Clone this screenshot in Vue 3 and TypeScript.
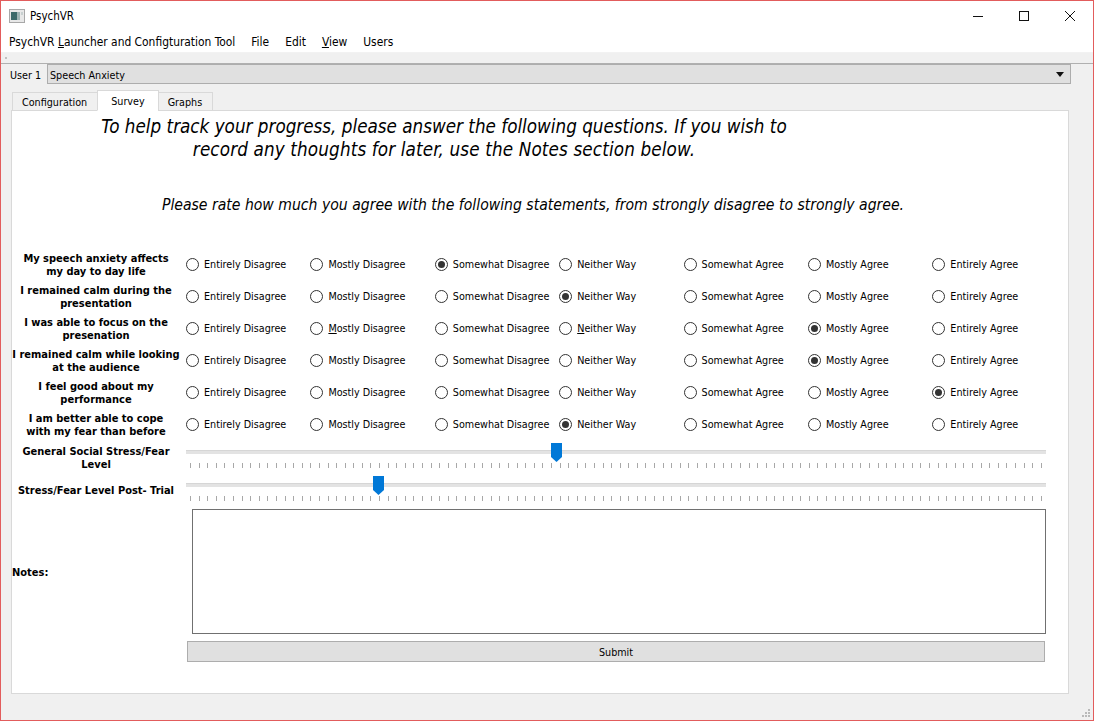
<script setup lang="ts">
const options = ['Entirely Disagree','Mostly Disagree','Somewhat Disagree','Neither Way','Somewhat Agree','Mostly Agree','Entirely Agree']
const questions = [
  { lines: ['My speech anxiety affects','my day to day life'], sel: 2, ul: [] as number[] },
  { lines: ['I remained calm during the','presentation'], sel: 3, ul: [] as number[] },
  { lines: ['I was able to focus on the','presenation'], sel: 5, ul: [1,3] },
  { lines: ['I remained calm while looking','at the audience'], sel: 5, ul: [] as number[] },
  { lines: ['I feel good about my','performance'], sel: 6, ul: [] as number[] },
  { lines: ['I am better able to cope','with my fear than before'], sel: 3, ul: [] as number[] },
]
const ticks = Array.from({ length: 100 })
</script>

<template>
  <div class="win">
    <header class="titlebar">
      <svg class="appicon" width="16" height="14" viewBox="0 0 16 14">
        <rect x="0.5" y="0.5" width="15" height="13" fill="#e8e8e8" stroke="#a8a8a8"/>
        <rect x="2" y="3" width="6" height="8" fill="#3c6a6a"/>
        <rect x="8" y="3" width="3" height="8" fill="#9fb4b4"/>
        <rect x="12" y="3" width="2" height="3" fill="#c8d0d0"/>
      </svg>
      <span class="title">PsychVR</span>
      <div class="controls">
        <svg width="46" height="30" viewBox="0 0 46 30"><path d="M18 15.500h10" stroke="#111" fill="none"/></svg>
        <svg width="46" height="30" viewBox="0 0 46 30"><rect x="18.500" y="10.500" width="9" height="9" stroke="#111" fill="none"/></svg>
        <svg width="46" height="30" viewBox="0 0 46 30"><path d="M18 10l10 10M28 10l-10 10" stroke="#111" fill="none"/></svg>
      </div>
    </header>
    <nav class="menubar">
      <span>PsychVR <u>L</u>auncher and Configturation Tool</span>
      <span>File</span>
      <span>Edit</span>
      <span><u>V</u>iew</span>
      <span>Users</span>
    </nav>
    <div class="strip"><i class="grip"></i></div>
    <div class="userrow">
      <span class="user">User 1</span>
      <div class="combo">
        <span>Speech Anxiety</span>
        <i class="caret"></i>
      </div>
    </div>
    <div class="tabs">
      <span class="tab">Configuration</span>
      <span class="tab active">Survey</span>
      <span class="tab">Graphs</span>
    </div>
    <main class="pane">
      <h1 class="heading">To help track your progress, please answer the following questions. If you wish to<br><span class="line2">record any thoughts for later, use the Notes section below.</span></h1>
      <p class="sub">Please rate how much you agree with the following statements, from strongly disagree to strongly agree.</p>
      <div class="questions">
        <div v-for="(q, qi) in questions" :key="qi" class="row">
          <div class="label"><div v-for="l in q.lines" :key="l">{{ l }}</div></div>
          <div class="radios">
            <label v-for="(o, oi) in options" :key="o" class="radio">
              <span class="dot" :class="{ on: q.sel === oi }"></span>
              <span v-if="q.ul.includes(oi)"><u>{{ o[0] }}</u>{{ o.slice(1) }}</span>
              <span v-else>{{ o }}</span>
            </label>
          </div>
        </div>
      </div>
      <div class="sliderrow first">
        <div class="label">General Social Stress/Fear<br>Level</div>
        <div class="slider">
          <div class="track"></div>
          <svg class="handle" style="left: 365px" width="11" height="19" viewBox="0 0 11 19"><path d="M0 0h11v14l-5.500 5L0 14z" fill="#0078d7"/></svg>
          <div class="ticks"><i v-for="(_, i) in ticks" :key="i"></i></div>
        </div>
      </div>
      <div class="sliderrow second">
        <div class="label">Stress/Fear Level Post- Trial</div>
        <div class="slider">
          <div class="track"></div>
          <svg class="handle" style="left: 187px" width="11" height="19" viewBox="0 0 11 19"><path d="M0 0h11v14l-5.500 5L0 14z" fill="#0078d7"/></svg>
          <div class="ticks"><i v-for="(_, i) in ticks" :key="i"></i></div>
        </div>
      </div>
      <div class="notesrow">
        <div class="noteslabel">Notes:</div>
        <div class="notes"></div>
      </div>
      <button class="submit">Submit</button>
    </main>
    <svg class="sizegrip" width="9" height="9" viewBox="0 0 9 9" fill="#b9b9b9">
      <rect x="6" y="0" width="2" height="2"/><rect x="3" y="3" width="2" height="2"/><rect x="6" y="3" width="2" height="2"/>
      <rect x="0" y="6" width="2" height="2"/><rect x="3" y="6" width="2" height="2"/><rect x="6" y="6" width="2" height="2"/>
    </svg>
  </div>
</template>

<style>
html, body { margin: 0; background: #f0f0f0; }
</style>

<style scoped>
.win {
  position: relative;
  box-sizing: border-box;
  width: 1094px;
  height: 721px;
  border: 1px solid #e25c5c;
  background: #f0f0f0;
  font-family: "DejaVu Sans Condensed", "DejaVu Sans", sans-serif;
  font-size: 10.7px;
  color: #000;
  overflow: hidden;
}
.titlebar {
  height: 30px;
  background: #fff;
  display: flex;
  align-items: center;
  padding-left: 8px;
  font-size: 11.5px;
}
.appicon { margin-right: 5px; }
.controls { margin-left: auto; display: flex; }
.menubar {
  height: 21px;
  background: #fff;
  display: flex;
  align-items: center;
  gap: 16px;
  padding-left: 8px;
  font-size: 11.9px;
  border-bottom: 1px solid #f2f2f2;
}
.strip {
  height: 10px;
  background: #f0f0f0;
  border-bottom: 1px solid #b0b0b0;
  position: relative;
}
.grip {
  position: absolute;
  left: 4px;
  top: 4px;
  width: 2px;
  height: 2px;
  background: #c0c0c0;
}
.userrow {
  display: flex;
  align-items: center;
  height: 20px;
  padding-left: 9px;
}
.user { width: 37px; padding-top: 2px; }
.combo {
  box-sizing: border-box;
  width: 1024px;
  height: 20px;
  background: #e0e0e0;
  border: 1px solid #adadad;
  display: flex;
  align-items: center;
  justify-content: space-between;
  padding: 2px 6px 0 2px;
}
.caret {
  width: 0;
  height: 0;
  margin-top: -2px;
  border: 4px solid transparent;
  border-top: 5px solid #111;
  border-bottom: 0;
}
.tabs {
  display: flex;
  align-items: flex-end;
  height: 27px;
  margin-left: 11px;
  position: relative;
  z-index: 1;
}
.tab {
  box-sizing: border-box;
  height: 19px;
  padding: 2px 10px 0 9px;
  display: flex;
  align-items: center;
  background: #f0f0f0;
  border: 1px solid #d9d9d9;
  margin-left: -1px;
}
.tab:first-child { margin-left: 0; }
.tab.active {
  height: 21px;
  background: #fff;
  border-bottom-color: #fff;
  padding: 2px 13px 0;
}
.pane {
  box-sizing: border-box;
  width: 1058px;
  height: 584px;
  margin-left: 10px;
  margin-top: -1px;
  background: #fff;
  border: 1px solid #d9d9d9;
  position: relative;
}
.heading {
  margin: 4px 0 0 70px;
  width: 724px;
  font-size: 18.7px;
  line-height: 23px;
  font-weight: 400;
  font-style: italic;
  text-align: center;
  white-space: nowrap;
}
.line2 { letter-spacing: 0.14px; }
.sub {
  margin: 34px 0 0;
  width: 1042px;
  font-size: 15.6px;
  line-height: 20px;
  font-style: italic;
  text-align: center;
}
.questions { margin-top: 33px; }
.row { display: flex; height: 32px; align-items: center; }
.row .label { padding-top: 2px; }
.label {
  width: 168px;
  margin-right: 6px;
  flex: none;
  font-size: 11px;
  font-weight: 700;
  line-height: 13px;
  text-align: center;
  white-space: nowrap;
}
.radios {
  display: grid;
  grid-template-columns: repeat(7, 124.4px);
}
.radio { display: flex; align-items: center; gap: 5px; white-space: nowrap; }
.dot {
  box-sizing: border-box;
  width: 13px;
  height: 13px;
  border: 1px solid #333;
  border-radius: 50%;
  background: #fff;
  position: relative;
}
.dot.on::after {
  content: "";
  position: absolute;
  inset: 2px;
  border-radius: 50%;
  background: #333;
}
.sliderrow { display: flex; }
.sliderrow.first { height: 33px; margin-top: 5px; }
.sliderrow.second { height: 29px; }
.slider { position: relative; width: 860px; }
.track {
  height: 4px;
  margin-top: 5px;
  background: #e3e3e3;
  border-top: 1px solid #d6d6d6;
  box-sizing: border-box;
}
.handle { position: absolute; top: -2px; }
.ticks {
  display: flex;
  justify-content: space-between;
  margin: 9px 4px 0;
}
.ticks i { width: 1px; height: 5px; background: #a8a8a8; }
.second .label { padding-top: 6px; }
.notesrow { display: flex; align-items: center; margin-top: 2px; }
.noteslabel { width: 180px; flex: none; font-size: 11px; font-weight: 700; padding-top: 2px; }
.notes {
  box-sizing: border-box;
  width: 854px;
  height: 125px;
  background: #fff;
  border: 1px solid #707070;
}
.submit {
  display: block;
  box-sizing: border-box;
  width: 858px;
  height: 21px;
  margin: 7px 0 0 175px;
  background: #e0e0e0;
  border: 1px solid #adadad;
  font: inherit;
  color: #000;
  padding: 2px 0 0;
}
.sizegrip { position: absolute; right: 2px; bottom: 2px; }
</style>
